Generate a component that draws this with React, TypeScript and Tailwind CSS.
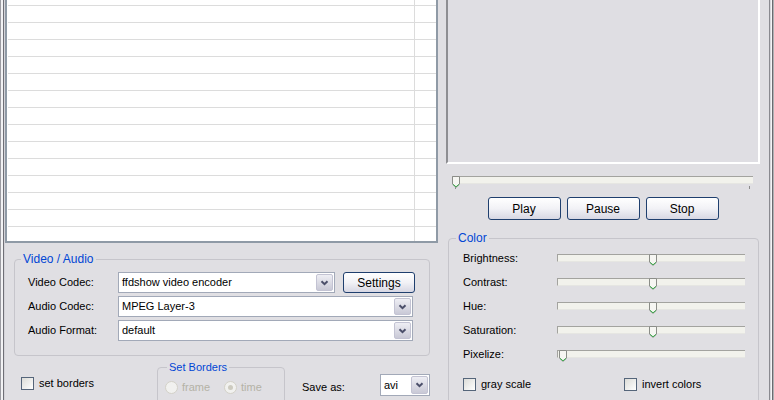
import React from "react";

// XP-style capture dialog (silver theme)

function Chevron() {
    return (
        <svg width="9" height="6" viewBox="0 0 9 6">
            <path d="M1.5 1.2 L4.5 4.2 L7.5 1.2" fill="none" stroke="#4b4f6a" strokeWidth="2" />
        </svg>
    );
}

function DropButton() {
    return (
        <div className="w-[17px] m-[1px] flex items-center justify-center rounded-[2px] border border-[#c3c3d3] bg-gradient-to-b from-[#eeeef4] to-[#c9c9d6]">
            <Chevron />
        </div>
    );
}

function Combo({ text, width }: { text: string; width: string }) {
    return (
        <div className={`${width} h-[21px] flex items-stretch bg-white border border-[#a2a9b8]`}>
            <div className="flex-1 flex items-center pl-[3px] leading-none truncate">{text}</div>
            <DropButton />
        </div>
    );
}

function XpButton({ label, className = "" }: { label: string; className?: string }) {
    return (
        <button
            type="button"
            className={`flex items-center justify-center rounded-[3px] border border-[#1f3f6e] bg-gradient-to-b from-[#ffffff] via-[#f2f2f6] to-[#d7d7e3] text-black text-[12px] leading-none ${className}`}
        >
            {label}
        </button>
    );
}

function Checkbox({ label }: { label: string }) {
    return (
        <div className="flex items-center gap-[5px]">
            <div className="w-[13px] h-[13px] border border-[#55657a] bg-gradient-to-br from-[#dcdcd8] to-white" />
            <span className="leading-none">{label}</span>
        </div>
    );
}

function Radio({ label, checked }: { label: string; checked?: boolean }) {
    return (
        <div className="flex items-center gap-[4px] text-[#b4b2a6]">
            <div className="w-[13px] h-[13px] rounded-full border border-[#d3d1c8] bg-[#f1f1ef] flex items-center justify-center">
                {checked && <div className="w-[5px] h-[5px] rounded-full bg-[#cdcbc0]" />}
            </div>
            <span className="leading-none">{label}</span>
        </div>
    );
}

function Thumb({ left }: { left: string }) {
    return (
        <svg className="absolute top-[-1px]" style={{ left }} width="8" height="12" viewBox="0 0 8 12">
            <path d="M0.5 0.5 H7.5 V8 L4 11.5 L0.5 8 Z" fill="#f6f6f2" stroke="#8b8d88" />
            <path d="M1 8.4 L4 10.8 L7 8.4" fill="none" stroke="#3aa84a" strokeWidth="1" />
        </svg>
    );
}

function Track({ width, thumb }: { width: string; thumb: string }) {
    return (
        <div className={`relative shrink-0 ${width} h-[8px] border-t border-l border-[#a3a39f] border-b border-b-[#e6e6e2] bg-[#f2f2ec]`}>
            <Thumb left={thumb} />
        </div>
    );
}

function ListBox() {
    const rows = Array.from({ length: 13 });
    return (
        <div className="shrink-0 h-[243px] border-x-2 border-b-2 border-[#8f9aa6] bg-white pl-[1px] flex flex-col">
            <div className="shrink-0 flex h-[6px]">
                <div className="w-[407px] border-r border-b border-[#dcdcdc]" />
                <div className="flex-1 border-b border-[#dcdcdc]" />
            </div>
            {rows.map((_, i) => (
                <div key={i} className="shrink-0 flex h-[17px]">
                    <div className="w-[407px] border-r border-b border-[#dcdcdc]" />
                    <div className="flex-1 border-b border-[#dcdcdc]" />
                </div>
            ))}
            <div className="flex flex-1">
                <div className="w-[407px] border-r border-[#dcdcdc]" />
                <div className="flex-1" />
            </div>
        </div>
    );
}

export default function App() {
    const colorRows = ["Brightness:", "Contrast:", "Hue:", "Saturation:", "Pixelize:"];

    return (
        <div className="w-[774px] h-[400px] overflow-hidden bg-[#e0dfe3] flex text-[11px] text-black font-['Liberation_Sans',Arial,sans-serif]">
            {/* left window frame */}
            <div className="w-[5px] shrink-0 flex">
                <div className="w-[1px] bg-[#9c9ca2]" />
                <div className="w-[2px] bg-[#f2f2f4]" />
                <div className="w-[1px] bg-[#6f6f76]" />
                <div className="w-[1px] bg-[#d4d3d8]" />
            </div>

            {/* left column */}
            <div className="w-[433px] shrink-0 flex flex-col">
                <ListBox />

                <fieldset className="shrink-0 ml-[9px] mt-[9px] w-[416px] border border-[#c6c5cb] rounded-[4px] pl-[13px] pt-[6px] pb-[14px]">
                    <legend className="ml-[-7px] px-[2px] text-[#0046d5] text-[12px] leading-[14px]">Video / Audio</legend>
                    <div className="flex flex-col gap-[3px]">
                        <div className="flex items-center">
                            <span className="w-[90px]">Video Codec:</span>
                            <Combo text="ffdshow video encoder" width="w-[217px]" />
                            <XpButton label="Settings" className="ml-[8px] w-[72px] h-[21px]" />
                        </div>
                        <div className="flex items-center">
                            <span className="w-[90px]">Audio Codec:</span>
                            <Combo text="MPEG Layer-3" width="w-[295px]" />
                        </div>
                        <div className="flex items-center">
                            <span className="w-[90px]">Audio Format:</span>
                            <Combo text="default" width="w-[295px]" />
                        </div>
                    </div>
                </fieldset>

                <div className="shrink-0 ml-[9px] mt-[4px] flex items-start">
                    <div className="w-[143px] pl-[7px] pt-[17px]">
                        <Checkbox label="set borders" />
                    </div>
                    <fieldset className="w-[128px] h-[60px] border border-[#c6c5cb] rounded-[4px] pl-[7px] pt-[6px]">
                        <legend className="ml-[2px] px-[2px] text-[#0046d5] leading-[14px]">Set Borders</legend>
                        <div className="flex items-center h-[14px]">
                            <div className="w-[59px]">
                                <Radio label="frame" />
                            </div>
                            <Radio label="time" checked />
                        </div>
                    </fieldset>
                    <div className="ml-[17px] w-[78px] pt-[20px] leading-[14px]">Save as:</div>
                    <div className="mt-[14px]">
                        <div className="w-[50px] h-[22px] flex items-stretch bg-white border border-[#a2a9b8]">
                            <div className="flex-1 flex items-center pl-[3px] leading-none">avi</div>
                            <DropButton />
                        </div>
                    </div>
                </div>
            </div>

            <div className="w-[8px] shrink-0" />

            {/* right column */}
            <div className="w-[314px] shrink-0 flex flex-col">
                <div className="shrink-0 h-[164px] border-l-2 border-l-[#8e8e92] border-r-2 border-b-2 border-white bg-[#dfdee3]" />

                <div className="shrink-0 mt-[12px] ml-[6px]">
                    <Track width="w-[301px]" thumb="-1px" />
                </div>
                <div className="shrink-0 mt-[2px] ml-[6px] w-[301px] h-[6px] flex justify-between px-[3px]">
                    <div className="w-[1px] h-[3px] bg-[#8c8c8c]" />
                    <div className="w-[1px] h-[3px] bg-[#8c8c8c]" />
                </div>

                <div className="shrink-0 mt-[5px] flex justify-center gap-[6px]">
                    <XpButton label="Play" className="w-[73px] h-[23px]" />
                    <XpButton label="Pause" className="w-[73px] h-[23px]" />
                    <XpButton label="Stop" className="w-[73px] h-[23px]" />
                </div>

                <fieldset className="shrink-0 ml-[2px] mt-[11px] w-[311px] h-[200px] border border-[#c6c5cb] rounded-[4px] pl-[14px] pt-[1px]">
                    <legend className="ml-[-7px] px-[2px] text-[#0046d5] text-[12px] leading-[14px]">Color</legend>
                    {colorRows.map((label, i) => (
                        <div key={label} className="h-[24px] flex items-center">
                            <span className="w-[94px]">{label}</span>
                            <Track width="w-[188px]" thumb={i === 4 ? "1px" : "91px"} />
                        </div>
                    ))}
                    <div className="mt-[6px] h-[24px] flex items-center">
                        <div className="w-[161px]">
                            <Checkbox label="gray scale" />
                        </div>
                        <Checkbox label="invert colors" />
                    </div>
                </fieldset>
            </div>

            <div className="w-[9px] shrink-0" />

            {/* right window frame */}
            <div className="w-[5px] shrink-0 flex">
                <div className="w-[1px] bg-[#8a8a90]" />
                <div className="w-[1px] bg-[#d8d7dc]" />
                <div className="w-[1px] bg-[#f4f4f6]" />
                <div className="w-[1px] bg-[#6a6a70]" />
                <div className="w-[1px] bg-[#b0b0b4]" />
            </div>
        </div>
    );
}
